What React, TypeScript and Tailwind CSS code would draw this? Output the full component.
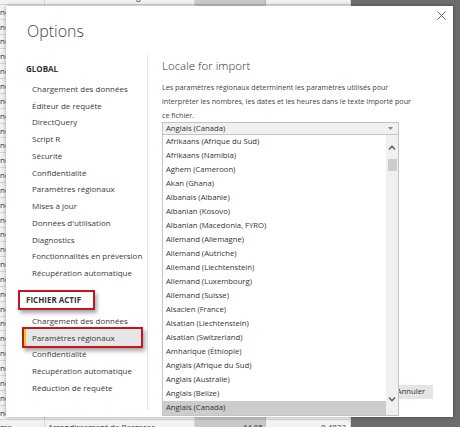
const globalItems = [
  'Chargement des données',
  'Éditeur de requête',
  'DirectQuery',
  'Script R',
  'Sécurité',
  'Confidentialité',
  'Paramètres régionaux',
  'Mises à jour',
  "Données d'utilisation",
  'Diagnostics',
  'Fonctionnalités en préversion',
  'Récupération automatique',
];

const fileItems = [
  'Chargement des données',
  'Paramètres régionaux',
  'Confidentialité',
  'Récupération automatique',
  'Réduction de requête',
];

const locales = [
  'Afrikaans (Afrique du Sud)',
  'Afrikaans (Namibia)',
  'Aghem (Cameroon)',
  'Akan (Ghana)',
  'Albanais (Albanie)',
  'Albanian (Kosovo)',
  'Albanian (Macedonia, FYRO)',
  'Allemand (Allemagne)',
  'Allemand (Autriche)',
  'Allemand (Liechtenstein)',
  'Allemand (Luxembourg)',
  'Allemand (Suisse)',
  'Alsacien (France)',
  'Alsatian (Liechtenstein)',
  'Alsatian (Switzerland)',
  'Amharique (Éthiopie)',
  'Anglais (Afrique du Sud)',
  'Anglais (Australie)',
  'Anglais (Belize)',
  'Anglais (Canada)',
];

/** The spreadsheet peeking out behind the dialog. */
function Sheet() {
  const rows = Array.from({ length: 30 }, (_, i) => i);
  return (
    <div className="-mt-[10px] flex flex-col">
      {rows.map((i) => {
        const first = i === 0;
        const last = i === 29;
        return (
          <div key={i} className="flex h-[14.85px] text-[8px] leading-none text-[#333]">
            <div className="flex w-[45px] items-center border-b border-r border-[#d4d4d4] bg-[#f2f2f2]">
              {last ? 'me' : 'ne'}
            </div>
            <div className="flex w-[150px] items-center border-b border-r border-[#d4d4d4] bg-[#f2f2f2] pl-[3px]">
              {first ? 'Arrondissement de Périgueux' : last ? 'Arrondissement de Bergerac' : ''}
            </div>
            <div className="flex w-[71px] items-center justify-end border-b border-r border-[#b8b8b8] bg-[#c9c9c9] pr-[2px]">
              {first ? '45.1855' : last ? '44.85' : ''}
            </div>
            <div className="flex w-[85px] items-center justify-end border-b border-r border-[#d4d4d4] bg-[#f2f2f2] pr-[4px]">
              {first ? '0.7107' : last ? '0.4833' : ''}
            </div>
          </div>
        );
      })}
    </div>
  );
}

function Chevron({ up }: { up?: boolean }) {
  return (
    <svg width="8" height="5" viewBox="0 0 8 5" className="mx-auto">
      <polyline
        points={up ? '1,4.5 4,1.3 7,4.5' : '1,0.5 4,3.7 7,0.5'}
        fill="none"
        stroke="#555"
        strokeWidth="1.3"
      />
    </svg>
  );
}

function LocaleSelect() {
  return (
    <div className="relative flex h-[13px] w-[237px] items-center border border-[#c4c4c4] bg-[#f0f0f0] pl-[3px] text-[7.7px] text-[#333]">
      <span>Anglais (Canada)</span>
      <svg width="5" height="3" viewBox="0 0 5 3" className="absolute right-[5px] top-[4px]">
        <polygon points="0,0 5,0 2.5,3" fill="#888" />
      </svg>

      {/* open list */}
      <div className="absolute -left-px top-full z-10 flex w-[237px] border border-[#c4c4c4] bg-white">
        <ul className="flex-1">
          {locales.map((l, i) => (
            <li
              key={l}
              className={`flex h-[14px] items-center pl-[3px] text-[7.7px] text-[#333] ${
                i === locales.length - 1 ? 'bg-[#cccccc]' : ''
              }`}
            >
              {l}
            </li>
          ))}
        </ul>
        <div className="flex w-[12px] flex-col bg-[#f0f0f0]">
          <div className="h-[24px] pt-[10px]">
            <Chevron up />
          </div>
          <div className="mx-auto h-[12px] w-[9px] bg-[#cdcdcd]" />
          <div className="mt-auto h-[20px] pt-[2px]">
            <Chevron />
          </div>
        </div>
      </div>
    </div>
  );
}

export default function App() {
  return (
    <div className="relative h-[427px] w-[460px] overflow-hidden bg-[#6d6d6d] font-['Open_Sans',sans-serif]">
      <Sheet />

      <div className="absolute left-[6px] top-[6px] flex h-[411px] w-[447px] flex-col bg-white shadow-[0_0_4px_rgba(0,0,0,0.35)]">
        <div className="relative h-[49px] shrink-0">
          <h1 className="pl-[21px] pt-[14px] text-[16px] font-light leading-[22px] text-[#444]">Options</h1>
          <svg width="9" height="9" viewBox="0 0 9 9" className="absolute right-[7px] top-[5px]">
            <path d="M0.5 0.5 L8.5 8.5 M8.5 0.5 L0.5 8.5" stroke="#666" strokeWidth="1" />
          </svg>
        </div>

        <div className="flex min-h-0 flex-1">
          <nav className="mb-[7px] w-[142px] shrink-0 whitespace-nowrap border-r border-[#e3e3e3] pl-[18px] pr-[6px] pt-[4px] text-[8px] text-[#3a3a3a]">
            <div className="flex h-[20px] items-center pl-[2px] font-bold text-[#333]">GLOBAL</div>
            <ul className="mt-[1.6px]">
              {globalItems.map((t) => (
                <li key={t} className="flex h-[16.75px] items-center pl-[8px]">
                  {t}
                </li>
              ))}
            </ul>
            <div className="mt-[10.4px] h-[16px]">
              <span className="-ml-[4px] inline-flex h-full items-center pl-[6px] pr-[12px] font-bold text-[#333] shadow-[0_0_0_2px_#c4161c,2px_3px_4px_2px_rgba(0,0,0,0.35)]">
                FICHIER ACTIF
              </span>
            </div>
            <ul className="mt-[4.6px]">
              {fileItems.map((t, i) =>
                i === 1 ? (
                  <li
                    key={t}
                    className="flex h-[16.75px] items-center border-l-2 border-[#f2c811] bg-[#e6e6e6] pl-[6px] shadow-[0_0_0_2px_#c4161c,2px_3px_4px_2px_rgba(0,0,0,0.35)]"
                  >
                    {t}
                  </li>
                ) : (
                  <li key={t} className="flex h-[16.75px] items-center pl-[8px]">
                    {t}
                  </li>
                ),
              )}
            </ul>
          </nav>

          <section className="flex min-w-0 flex-1 flex-col pl-[14px] pr-[20px] pt-[3px]">
            <h2 className="text-[11.5px] font-light leading-[16px] text-[#333]">Locale for import</h2>
            <p className="mt-[6px] whitespace-nowrap text-[7.2px] leading-[14px] text-[#444]">
              Les paramètres régionaux déterminent les paramètres utilisés pour
              <br />
              interpréter les nombres, les dates et les heures dans le texte importé pour
              <br />
              ce fichier.
            </p>
            <LocaleSelect />

            <div className="mb-[18px] mt-auto flex justify-end gap-[6px]">
              <button className="h-[14px] w-[44px] bg-[#e5e5e5] text-[7.7px] text-[#333]">OK</button>
              <button className="h-[14px] w-[44px] bg-[#e5e5e5] text-[7.7px] text-[#333]">Annuler</button>
            </div>
          </section>
        </div>
      </div>
    </div>
  );
}
